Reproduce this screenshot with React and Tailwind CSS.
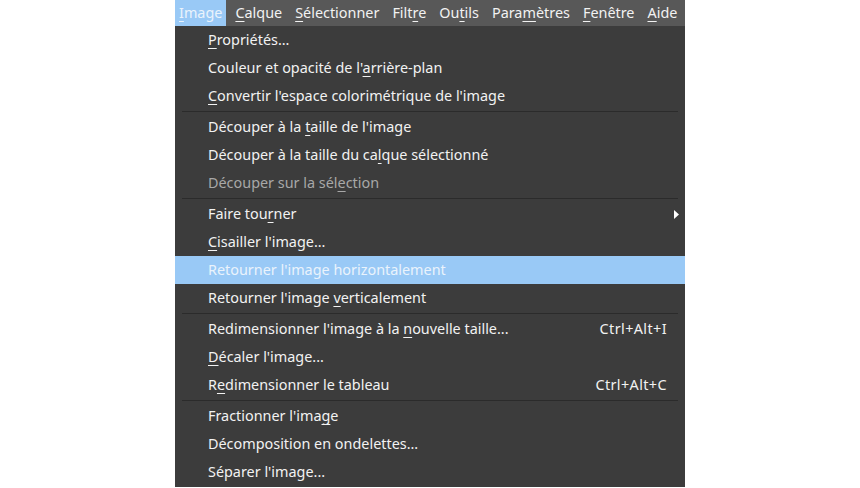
const font = { fontFamily: '"Noto Sans", "Open Sans", sans-serif' };

const topMenu = [
  { pre: '', key: 'I', post: 'mage', active: true },
  { pre: '', key: 'C', post: 'alque' },
  { pre: '', key: 'S', post: 'électionner' },
  { pre: 'Filt', key: 'r', post: 'e' },
  { pre: 'Ou', key: 't', post: 'ils' },
  { pre: 'Para', key: 'm', post: 'ètres' },
  { pre: '', key: 'F', post: 'enêtre' },
  { pre: '', key: 'A', post: 'ide' },
];

const groups = [
  [
    { pre: '', key: 'P', post: 'ropriétés...' },
    { pre: "Couleur et opacité de l'", key: 'a', post: 'rrière-plan' },
    { pre: '', key: 'C', post: "onvertir l'espace colorimétrique de l'image" },
  ],
  [
    { pre: 'Découper à la ', key: 't', post: "aille de l'image" },
    { pre: 'Découper à la taille du ca', key: 'l', post: 'que sélectionné' },
    { pre: 'Découper sur la sél', key: 'e', post: 'ction', disabled: true },
  ],
  [
    { pre: 'Faire tou', key: 'r', post: 'ner', sub: true },
    { pre: '', key: 'C', post: "isailler l'image..." },
    { pre: "Retourner l'image horizontalement", key: '', post: '', active: true },
    { pre: "Retourner l'image ", key: 'v', post: 'erticalement' },
  ],
  [
    { pre: "Redimensionner l'image à la ", key: 'n', post: 'ouvelle taille...', shortcut: 'Ctrl+Alt+I' },
    { pre: '', key: 'D', post: "écaler l'image..." },
    { pre: 'R', key: 'e', post: 'dimensionner le tableau', shortcut: 'Ctrl+Alt+C' },
  ],
  [
    { pre: "Fractionner l'ima", key: 'g', post: 'e' },
    { pre: 'Décomposition en ondelettes...', key: '', post: '' },
    { pre: "Séparer l'image...", key: '', post: '' },
  ],
];

function Label({ item }) {
  return (
    <span className="whitespace-nowrap">
      {item.pre}
      {item.key && <u className="underline-offset-[3px]">{item.key}</u>}
      {item.post}
    </span>
  );
}

function Row({ item }) {
  let cls = 'text-[#f2f2f2]';
  if (item.active) cls = 'bg-[#99c9f6] text-[#eaf3fc]';
  if (item.disabled) cls = 'text-[#a8a8a8]';
  return (
    <div className={`relative flex h-[28px] items-center justify-between pl-[33px] pr-[18px] ${cls}`}>
      <Label item={item} />
      {item.shortcut && <span className="tracking-[0.4px]">{item.shortcut}</span>}
      {item.sub && (
        <svg className="absolute right-[6px] top-[10px]" width="5" height="9" viewBox="0 0 5 9">
          <path d="M0 0 L5 4.5 L0 9 Z" fill="#ffffff" />
        </svg>
      )}
    </div>
  );
}

export default function App() {
  return (
    <div className="flex h-[488px] justify-center bg-white" style={font}>
      <div className="flex h-[487px] w-[510px] flex-col text-[14.4px]">
        {/* barre de menus */}
        <div className="flex h-[26px] items-center gap-[5px] bg-[#585858] text-[#f2f2f2]">
          {topMenu.map((m, i) => (
            <div
              key={i}
              className={`flex h-full items-center px-[4px] pb-px ${m.active ? 'bg-[#99c9f6] text-[#eaf3fc]' : ''}`}
            >
              <Label item={m} />
            </div>
          ))}
        </div>

        {/* menu déroulant Image */}
        <div className="flex flex-1 flex-col justify-between bg-[#3c3c3c] pb-[1px]">
          {groups.map((g, gi) => (
            <div key={gi}>
              {gi > 0 && (
                <div className="flex h-[3px] items-center px-[7px]">
                  <div className="h-px flex-1 bg-[#2b2b2b]" />
                </div>
              )}
              {g.map((item, ii) => (
                <Row key={ii} item={item} />
              ))}
            </div>
          ))}
        </div>
      </div>
    </div>
  );
}
